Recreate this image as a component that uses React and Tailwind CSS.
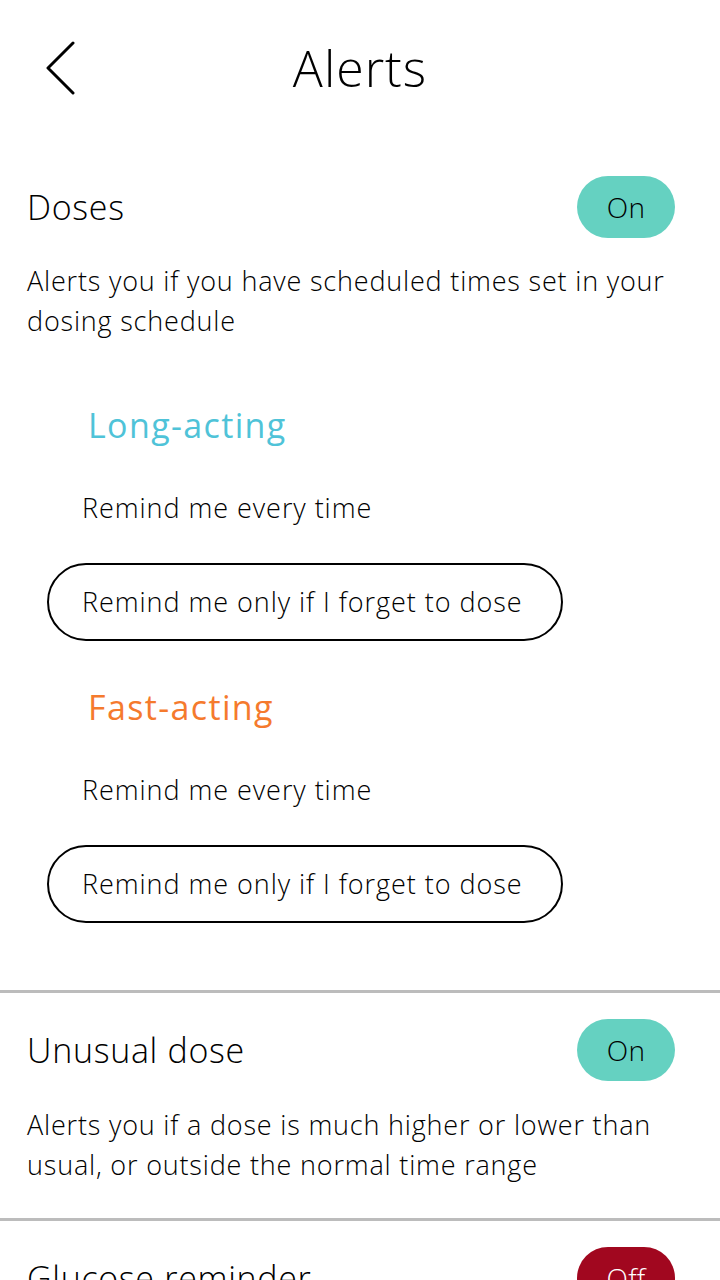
import React from "react";

const font = { fontFamily: "'Open Sans', Lato, sans-serif" };

function Toggle({ on }) {
  return (
    <div
      className={
        "w-[98px] h-[62px] rounded-full flex items-center justify-center text-[28px] tracking-[0.01em] " +
        (on ? "bg-[#65d1c1] text-black" : "bg-[#a1071f] text-white")
      }
    >
      {on ? "On" : "Off"}
    </div>
  );
}

function DoseGroup({ title, color }) {
  return (
    <div className="flex flex-col">
      <div className={"pl-[88px] pr-[20px] h-[50px] leading-[50px] text-[34px] font-normal tracking-[0.04em] " + color}>
        {title}
      </div>
      <div className="mt-[38px] pl-[82px] h-[40px] leading-[40px] text-[27px] tracking-[0.035em] text-black">
        Remind me every time
      </div>
      <div className="mt-[35px] ml-[47px] w-[516px] h-[78px] rounded-full border-2 border-black flex items-center pl-[33px] text-[27px] tracking-[0.035em] text-black">
        Remind me only if I forget to dose
      </div>
    </div>
  );
}

export default function App() {
  return (
    <div className="w-[720px] h-[1280px] overflow-hidden bg-white text-black font-light" style={font}>
      <header className="h-[136px] grid grid-cols-[1fr_auto_1fr] items-center">
        <div className="pl-[45px] flex items-center">
          <svg width="30" height="54" viewBox="0 0 30 54" fill="none">
            <path d="M28 2 L3 27 L28 52" stroke="#000" strokeWidth="3" strokeLinecap="round" strokeLinejoin="round" />
          </svg>
        </div>
        <h1 className="text-[50px] leading-none font-light tracking-[0.02em]">Alerts</h1>
        <div />
      </header>

      <section className="flex flex-col">
        <div className="mt-[40px] pl-[27px] pr-[45px] flex items-center justify-between">
          <span className="text-[34px] tracking-[0.02em]">Doses</span>
          <Toggle on />
        </div>
        <p className="mt-[23px] px-[27px] text-[27px] leading-[40px] tracking-[0.03em]">
          Alerts you if you have scheduled times set in your
          <br />
          dosing schedule
        </p>
        <div className="mt-[59px]">
          <DoseGroup title="Long-acting" color="text-[#4fc3d8]" />
        </div>
        <div className="mt-[41px]">
          <DoseGroup title="Fast-acting" color="text-[#f57a2d]" />
        </div>
      </section>

      <div className="mt-[67px] h-[3px] bg-[#bcbcbc]" />

      <section className="flex flex-col">
        <div className="mt-[26px] pl-[27px] pr-[45px] flex items-center justify-between">
          <span className="text-[34px] tracking-[0.02em]">Unusual dose</span>
          <Toggle on />
        </div>
        <p className="mt-[24px] px-[27px] text-[27px] leading-[40px] tracking-[0.03em]">
          Alerts you if a dose is much higher or lower than
          <br />
          usual, or outside the normal time range
        </p>
      </section>

      <div className="mt-[33px] h-[3px] bg-[#bcbcbc]" />

      <section className="flex flex-col">
        <div className="mt-[26px] pl-[27px] pr-[45px] flex items-center justify-between">
          <span className="text-[34px] tracking-[0.02em]">Glucose reminder</span>
          <Toggle on={false} />
        </div>
      </section>
    </div>
  );
}
